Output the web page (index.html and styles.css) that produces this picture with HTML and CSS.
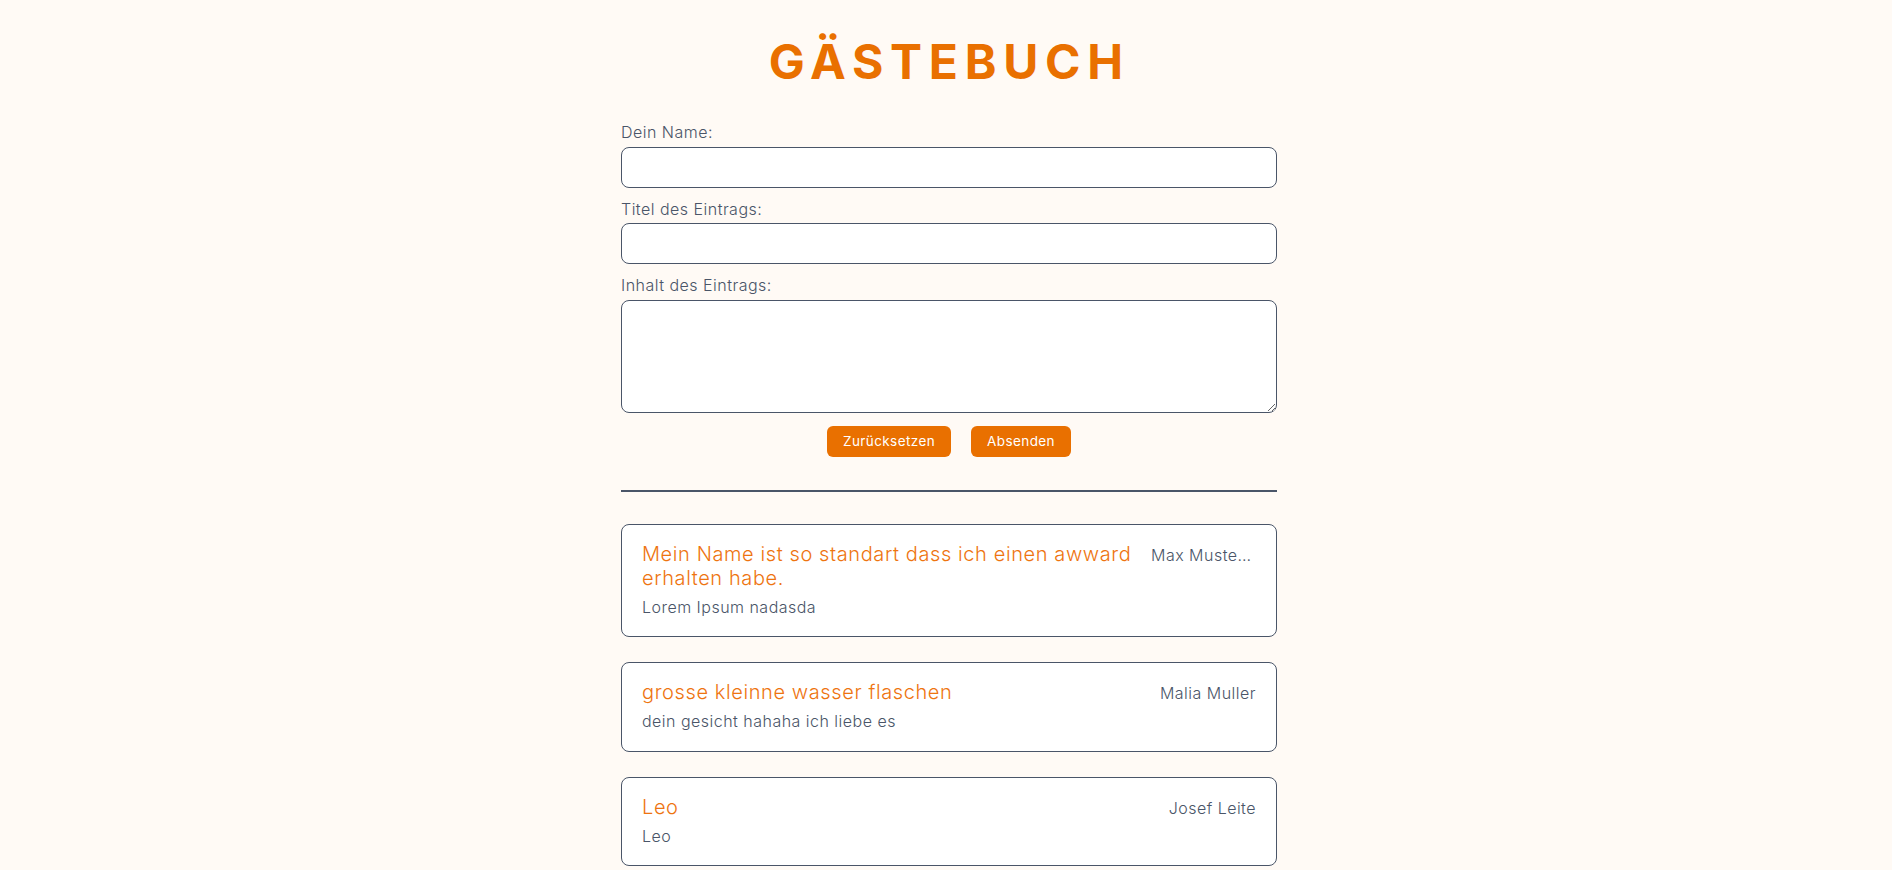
FILE: index.html
```html
<!DOCTYPE html>
<html lang="de">
<head>
<meta charset="utf-8">
<title>Gästebuch</title>
<link rel="stylesheet" href="styles.css">
</head>
<body>
<h1 class="page-title">GÄSTEBUCH</h1>
<main class="wrap">
  <form class="entry-form">
    <label class="field-label" for="name">Dein Name:</label>
    <input class="field-input" id="name" type="text">
    <label class="field-label" for="title">Titel des Eintrags:</label>
    <input class="field-input" id="title" type="text">
    <label class="field-label" for="content">Inhalt des Eintrags:</label>
    <textarea class="field-area" id="content"></textarea>
    <div class="actions">
      <button class="btn" type="reset">Zurücksetzen</button>
      <button class="btn" type="submit">Absenden</button>
    </div>
  </form>
  <hr class="divider">
  <section class="entries">
    <article class="entry">
      <div class="entry-head">
        <h2 class="entry-title">Mein Name ist so standart dass ich einen awward erhalten habe.</h2>
        <span class="entry-author">Max Mustermann</span>
      </div>
      <p class="entry-text">Lorem Ipsum nadasda</p>
    </article>
    <article class="entry">
      <div class="entry-head">
        <h2 class="entry-title">grosse kleinne wasser flaschen</h2>
        <span class="entry-author">Malia Muller</span>
      </div>
      <p class="entry-text">dein gesicht hahaha ich liebe es</p>
    </article>
    <article class="entry">
      <div class="entry-head">
        <h2 class="entry-title">Leo</h2>
        <span class="entry-author">Josef Leite</span>
      </div>
      <p class="entry-text">Leo</p>
    </article>
  </section>
</main>
</body>
</html>
```
FILE: styles.css
```css
* { box-sizing: border-box; }

html, body {
  margin: 0;
  background: #fffaf5;
}

body {
  font-family: Inter, "Open Sans", sans-serif;
  color: #4a5568;
  overflow: hidden;
}

.page-title {
  margin: 0;
  padding-top: 33px;
  text-align: center;
  font-family: Inter, sans-serif;
  font-size: 48px;
  line-height: 58px;
  font-weight: 700;
  letter-spacing: 0.14em;
  text-indent: 0.14em;
  color: #e97000;
}

.wrap {
  width: 656px;
  margin-left: calc(50% - 325px);
  padding-top: 32px;
}

.entry-form {
  display: flex;
  flex-direction: column;
}

.field-label {
  font-size: 16px;
  line-height: 19.5px;
  letter-spacing: 0.03em;
  font-weight: 300;
  margin-bottom: 4px;
}

.field-input,
.field-area {
  display: block;
  width: 100%;
  border: 1px solid #4a5568;
  border-radius: 8px;
  background: #fff;
  font-family: inherit;
  font-size: 16px;
  margin: 0 0 12px 0;
}

.field-input { height: 41px; }

.field-area {
  height: 113px;
  margin-bottom: 0;
  resize: vertical;
}

.actions {
  display: flex;
  justify-content: center;
  gap: 20px;
  margin-top: 13px;
}

.btn {
  height: 31px;
  padding: 0 16px;
  border: none;
  border-radius: 6px;
  background: #e97000;
  color: #fff;
  font-family: Inter, sans-serif;
  font-size: 13.5px;
  letter-spacing: 0.03em;
}

.divider {
  margin: 33px 0 0 0;
  border: none;
  border-top: 2px solid #4a5568;
  height: 0;
}

.entries {
  display: flex;
  flex-direction: column;
  gap: 25px;
  padding-top: 32px;
}

.entry {
  background: #fff;
  border: 1px solid #4a5568;
  border-radius: 8px;
  padding: 17px 20px 19px;
}

.entry-head {
  display: flex;
  align-items: baseline;
  gap: 16px;
}

.entry-title {
  flex: 1;
  margin: 0;
  font-size: 20px;
  line-height: 24px;
  font-weight: 300;
  letter-spacing: 0.03em;
  color: #ee7410;
}

.entry-author {
  max-width: 105px;
  white-space: nowrap;
  overflow: hidden;
  text-overflow: ellipsis;
  font-size: 16px;
  font-weight: 300;
  letter-spacing: 0.03em;
}

.entry-text {
  margin: 8px 0 0 0;
  font-size: 16px;
  line-height: 19.5px;
  font-weight: 300;
  letter-spacing: 0.03em;
}
```
